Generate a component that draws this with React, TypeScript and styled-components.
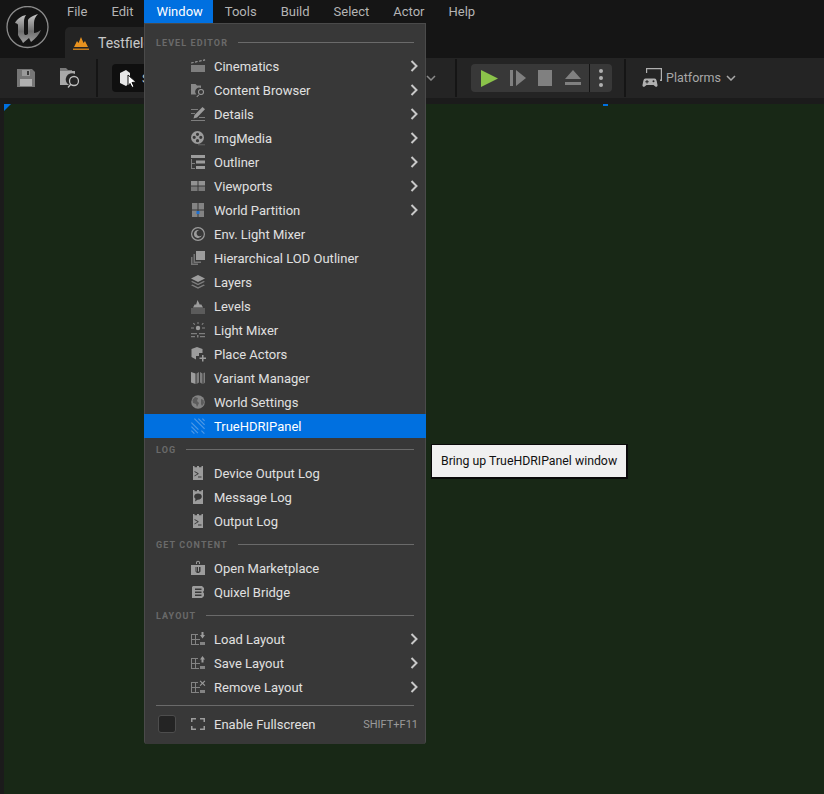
import React from "react";
import styled, { createGlobalStyle } from "styled-components";

const GlobalStyle = createGlobalStyle`
  html, body {
    margin: 0;
    padding: 0;
    background: #151515;
  }
  * {
    box-sizing: border-box;
  }
`;

const Editor = styled.div`
  position: relative;
  width: 824px;
  height: 794px;
  display: flex;
  flex-direction: column;
  overflow: hidden;
  background: #151515;
  font-family: Roboto, "Liberation Sans", sans-serif;
  font-size: 13px;
  color: #c0c0c0;
`;

const TitleBar = styled.header`
  height: 58px;
  display: flex;
  background: #151515;
`;

const LogoSlot = styled.div`
  width: 55px;
  padding: 6px 0 0 6px;
`;

const TitleColumn = styled.div`
  display: flex;
  flex-direction: column;
`;

const MenuBar = styled.nav`
  height: 23px;
  display: flex;
`;

const MenuItem = styled.div<{ $active?: boolean }>`
  display: flex;
  align-items: center;
  padding: 0 12px;
  color: ${(p) => (p.$active ? "#ffffff" : "#b4b4b4")};
  background: ${(p) => (p.$active ? "#0070e0" : "transparent")};
  &:nth-child(2) {
    padding-right: 11px;
  }
  &:nth-child(3) {
    padding-right: 10px;
  }
`;

const TabRow = styled.div`
  margin: 4px 0 0 10px;
  height: 31px;
  width: 200px;
  display: flex;
  align-items: center;
  gap: 9px;
  padding-left: 8px;
  background: #242424;
  border-radius: 5px 0 0 0;
  font-size: 14px;
  color: #c8c8c8;
`;

const Toolbar = styled.div`
  height: 40px;
  display: flex;
  align-items: center;
  background: #242424;
`;

const ToolIcon = styled.div<{ $width: number; $ml: number }>`
  width: ${(p) => p.$width}px;
  margin-left: ${(p) => p.$ml}px;
  height: 22px;
  display: flex;
  align-items: center;
  justify-content: center;
  color: #8a8a8a;
`;

const ToolDivider = styled.div<{ $ml: number }>`
  width: 2px;
  height: 38px;
  margin-left: ${(p) => p.$ml}px;
  background: #151515;
`;

const ModeButton = styled.div`
  margin-left: 14px;
  width: 314px;
  height: 28px;
  display: flex;
  align-items: center;
  gap: 3px;
  padding-left: 7px;
  border-radius: 4px;
  background: #0f0f0f;
  color: #c0c0c0;
  white-space: nowrap;
`;

const PlayGroup = styled.div`
  margin-left: 14px;
  width: 141px;
  height: 28px;
  display: flex;
  align-items: center;
  border-radius: 4px;
  background: #383838;
  color: #808080;
`;

const PlayButton = styled.div<{ $width: number; $pl: number }>`
  width: ${(p) => p.$width}px;
  padding-left: ${(p) => p.$pl}px;
  height: 100%;
  display: flex;
  align-items: center;
`;

const GroupDivider = styled.div`
  width: 1px;
  height: 28px;
  background: #151515;
`;

const DotsButton = styled.div`
  flex: 1;
  display: flex;
  flex-direction: column;
  align-items: center;
  gap: 3px;
`;

const Dot = styled.span`
  width: 4px;
  height: 4px;
  border-radius: 50%;
  background: #b0b0b0;
`;

const PlatformsButton = styled.div`
  margin-left: 16px;
  display: flex;
  align-items: center;
  color: #a8a8a8;
  font-size: 12.5px;
`;

const PlatformsLabel = styled.span`
  margin: -2px 5px 0 3px;
`;

const Chevron = styled.svg`
  display: block;
  fill: none;
  stroke: currentColor;
  stroke-width: 1.5;
`;

const Gutter = styled.div`
  height: 6px;
  background: #1b1b1b;
`;

const ViewportFrame = styled.main`
  flex: 1;
  display: flex;
  background: #1b1b1b;
`;

const Viewport = styled.div`
  position: relative;
  flex: 1;
  margin-left: 4px;
  background: #182816;
`;

const CornerMark = styled.div`
  position: absolute;
  left: 0;
  top: 0;
  width: 0;
  height: 0;
  border-top: 7px solid #0070e0;
  border-right: 7px solid transparent;
`;

const TickMark = styled.div`
  position: absolute;
  left: 599px;
  top: 0;
  width: 5px;
  height: 2px;
  background: #0070e0;
`;

const Menu = styled.div`
  position: absolute;
  left: 144px;
  top: 23px;
  width: 282px;
  height: 721px;
  padding-top: 7px;
  background: #383838;
  border: solid #4a4a4a;
  border-width: 1px 1px 0 1px;
  border-radius: 0 0 3px 3px;
`;

const SectionHeader = styled.div`
  height: 23px;
  display: flex;
  align-items: center;
  gap: 10px;
  padding: 0 11px;
  font-size: 9px;
  font-weight: 700;
  letter-spacing: 1.1px;
  color: #6a6a6a;
`;

const SectionRule = styled.div`
  flex: 1;
  height: 1px;
  background: #6a6a6a;
`;

const Row = styled.div<{ $active?: boolean }>`
  height: 24px;
  display: flex;
  align-items: center;
  margin: 0 -1px;
  padding: 0 8px 0 46px;
  color: #e0e0e0;
  background: ${(p) => (p.$active ? "#0070e0" : "transparent")};
  ${(p) => p.$active && "color: #ffffff;"}
`;

const CheckRow = styled(Row)`
  padding-left: 14px;
`;

const CheckBox = styled.div`
  width: 18px;
  height: 18px;
  margin-right: 14px;
  border: 1px solid #4d4d4d;
  border-radius: 3px;
  background: #242424;
`;

const IconSlot = styled.svg<{ $hdri?: boolean }>`
  width: 16px;
  height: 16px;
  margin-right: 8px;
  flex: none;
  fill: currentColor;
  color: ${(p) => (p.$hdri ? "#4f9ae6" : "#9c9c9c")};
`;

const RowLabel = styled.span`
  flex: 1;
`;

const Shortcut = styled.span`
  font-size: 11px;
  color: #9a9a9a;
`;

const SubArrow = styled(Chevron)`
  color: #c8c8c8;
  stroke-width: 2;
`;

const Separator = styled.div`
  height: 1px;
  margin: 6px 11px;
  background: #6a6a6a;
`;

const Tooltip = styled.div`
  position: absolute;
  left: 431px;
  top: 444px;
  width: 197px;
  height: 35px;
  display: flex;
  align-items: center;
  padding-left: 9px;
  background: #f0f0f0;
  border: 2px solid #0a0a0a;
  border-top-width: 1px;
  border-left-width: 1px;
  font-size: 12.3px;
  color: #111111;
  white-space: nowrap;
`;

const icons: Record<string, React.ReactNode> = {
  cinematics: (
    <>
      <path d="M1 7h14v7H1z" opacity=".7" />
      <path d="M1 4.5 3.5 4l.2 1.100-2.500.5zM5 3.600l2.500-.6.2 1.100-2.500.6zM9 2.700l2.500-.6.2 1.100-2.500.6zM13 1.800l2-.5.2 1.100-2 .5z" />
    </>
  ),
  browser: (
    <>
      <path d="M1 2h4.500L7 3.500h4V6a4 4 0 0 0-4.500 6.500H1z" opacity=".8" />
      <path d="M11 7a3 3 0 1 0 0 6 3 3 0 0 0 0-6zm0 1a2 2 0 1 1 0 4 2 2 0 0 1 0-4z" />
      <path d="m8.600 12.400.7.7-2.200 2.200-.7-.7z" />
    </>
  ),
  details: (
    <>
      <path d="M1 3h7v1H1zM1 7h4v1H1zM1 14h14v1H1zM9 11h6v1H9z" opacity=".7" />
      <path d="M12.500 1 15 3.200 7 11.500l-3.500 1 1-3.400z" />
    </>
  ),
  media: (
    <>
      <path
        fillRule="evenodd"
        d="M7.500 1a6.500 6.500 0 1 0 0 13 6.500 6.500 0 0 0 0-13zm0 1.700a1.600 1.600 0 1 1 0 3.200 1.600 1.600 0 0 1 0-3.200zm-3.300 3a1.600 1.600 0 1 1 0 3.200 1.600 1.600 0 0 1 0-3.200zm6.600 0a1.600 1.600 0 1 1 0 3.200 1.600 1.600 0 0 1 0-3.200zM7.500 9.100a1.600 1.600 0 1 1 0 3.200 1.600 1.600 0 0 1 0-3.200z"
      />
      <path d="M8 14.500h7v.7H8z" opacity=".6" />
    </>
  ),
  outliner: (
    <>
      <path d="M1 1h14v3H1zM6 6.500h9v3H6zM6 12h9v3H6z" />
      <path d="M1 5h1v9h3v1H1zM2 9h3v1H2z" opacity=".7" />
    </>
  ),
  viewports: (
    <>
      <path d="M1 3h6.500v4.500H1zM8.500 3H15v4.500H8.500z" opacity=".9" />
      <path d="M1 8.500h6.500V13H1zM8.500 8.500H15V13H8.500z" opacity=".65" />
    </>
  ),
  partition: (
    <>
      <path d="M2 1h5.500v6.500H2zM8.500 1H14v6.500H8.500zM2 8.500h5.500V15H2zM8.500 8.500H14V15H8.500z" opacity=".75" />
      <path d="M6.500 9h3v3h-3z" fill="#1d6fd0" />
    </>
  ),
  env: (
    <path
      fillRule="evenodd"
      d="M8 1a7 7 0 1 0 0 14A7 7 0 0 0 8 1zm0 1.200a5.800 5.800 0 1 1 0 11.600A5.800 5.800 0 0 1 8 2.200zM8 4a4 4 0 1 0 3.800 5.200 3 3 0 1 1-2.300-5z"
    />
  ),
  hlod: (
    <>
      <path d="M6 1h9v9H6z" />
      <path d="M3.500 4H5v7.500h6V13H3.500zM1 7h1.500v6.500H8V15H1z" opacity=".6" />
    </>
  ),
  layers: (
    <>
      <path d="M8 1l7 3.500L8 8 1 4.500z" />
      <path d="M2.500 7 8 9.800 13.500 7 15 7.800 8 11.300 1 7.800zM2.500 10.500 8 13.300l5.500-2.800 1.500.8-7 3.500-7-3.500z" opacity=".7" />
    </>
  ),
  levels: (
    <>
      <path d="M3 9.500 5 6l1 1 1.500-5L10 7l1-1 2 3.500z" />
      <path d="M1 10.500h14v1H1zM1 12.500h14v1H1zM1 14.500h14v1H1z" opacity=".7" />
    </>
  ),
  lightmix: (
    <>
      <circle cx="8" cy="6" r="2.200" />
      <path d="M7.500 0h1v2h-1zM1 5.500h3v1H1zM12 5.500h3v1h-3zM3 1.500l.7-.7 1.500 1.500-.7.7zM11.500 2.300l1.500-1.500.7.7-1.500 1.500z" opacity=".8" />
      <path d="M1 11h6v1.200H1zM9 11h6v1.200H9zM1 14h4v1.200H1zM7 13h1.500v2.500H7zM10 14h5v1.200h-5z" opacity=".7" />
    </>
  ),
  place: (
    <>
      <path d="M7 1l5.500 2v4H9v3H6v3.500L1.500 11V3z" />
      <path d="M12 9h1.500v2.500H16V13h-2.500v2.500H12V13H9.500v-1.500H12z" />
    </>
  ),
  variant: (
    <>
      <path d="M1 2l4.500 1.500V14L1 12.500z" />
      <path d="M6.500 3.500 9 2v10.500L6.500 14zM10 2l2.500 1.500V14L10 12.500zM13.500 3 15 2.500v10L13.500 14z" opacity=".7" />
    </>
  ),
  world: (
    <>
      <circle cx="8" cy="8" r="6.800" opacity=".75" />
      <path d="M5 3l3 1-1 3 2 2-2 4-1-3-3-1-.5-3zM11 5l2.500 1 .5 3-2 3-1-2z" fill="#5c5c5c" />
    </>
  ),
  hdri: (
    <path d="M1 5l.8-.8 7 7-.8.8zM1 9l.8-.8 6.500 6.500-.8.8zM4 1l.8-.8L15 10.400l-.8.8zM8 1l.8-.8 6.200 6.200-.8.8zM12 1l.8-.8 2.200 2.200-.8.8zM1 13l.8-.8 3 3-.8.8zM11 13l.8-.8 3 3-.8.8z" />
  ),
  log: (
    <path
      fillRule="evenodd"
      d="M3 1h1.500v1.200H7V1h2v1.200h2.500V1H13v14H3zm1.500 5v1l3 1.700-3 1.700v1l4-2.300v-.8zM8 11.500v1h3.500v-1z"
    />
  ),
  message: (
    <path
      fillRule="evenodd"
      d="M3 1h1.500v1.200H7V1h2v1.200h2.500V1H13v14H3zm5 3.500c-2.200 0-3.800 1.200-3.800 3 0 1 .5 1.800 1.300 2.300L5 12.500l2.500-1.800H8c2.200 0 3.800-1.200 3.800-3.100 0-1.900-1.600-3.100-3.800-3.100z"
    />
  ),
  market: (
    <path
      fillRule="evenodd"
      d="M6 4V2.800a2 2 0 0 1 4 0V4H9V2.800a1 1 0 0 0-2 0V4zM1 5h14v10H1zm4.500 2v4.500L7 13h2l1.500-1.500V7H9v4.500H8V7H7v4.500h-.5V7z"
    />
  ),
  quixel: (
    <path
      fillRule="evenodd"
      d="M3 2h9l2 2v2.500L13 8l1 1.500V12l-2 2H2V3zm2 2.500V6h6.500V4.500zm0 3V9h6.500V7.500zm0 3V12h6.500v-1.500z"
    />
  ),
  fullscreen: <path d="M1 2h5v1.500H2.500V6H1zM10 2h5v4h-1.500V3.500H10zM1 10h1.500v2.500H6V14H1zM13.500 10H15v4h-5v-1.500h3.500z" />,
};

const layoutGrid = (
  <path
    fillRule="evenodd"
    opacity=".75"
    d="M1 3h7v1H6v4h4v1H6v4h3v1H1zm1 1v4h3V4zm0 5v4h3V9zM10 11h5v3h-5z"
  />
);

const layoutIcons: Record<string, React.ReactNode> = {
  load: <path d="M11.500 1h2v3H15l-2.500 3.500L10 4h1.500z" />,
  save: <path d="M12.500 1 15 4.500h-1.500v3h-2v-3H10z" />,
  remove: <path d="m10.500 1.500 2 2 2-2 .8.8-2 2 2 2-.8.8-2-2-2 2-.8-.8 2-2-2-2z" />,
};

function MenuIcon({ name }: { name: string }) {
  return (
    <IconSlot viewBox="0 0 16 16" $hdri={name === "hdri"}>
      {layoutIcons[name] ? (
        <>
          {layoutGrid}
          {layoutIcons[name]}
        </>
      ) : (
        icons[name]
      )}
    </IconSlot>
  );
}

function Arrow() {
  return (
    <SubArrow width="8" height="12" viewBox="0 0 8 12">
      <path d="M1.500 1 6.500 6 1.500 11" />
    </SubArrow>
  );
}

interface IEntry {
  label: string;
  icon: string;
  sub?: boolean;
  active?: boolean;
}

interface ISection {
  title: string;
  entries: IEntry[];
}

const sections: ISection[] = [
  {
    title: "LEVEL EDITOR",
    entries: [
      { label: "Cinematics", icon: "cinematics", sub: true },
      { label: "Content Browser", icon: "browser", sub: true },
      { label: "Details", icon: "details", sub: true },
      { label: "ImgMedia", icon: "media", sub: true },
      { label: "Outliner", icon: "outliner", sub: true },
      { label: "Viewports", icon: "viewports", sub: true },
      { label: "World Partition", icon: "partition", sub: true },
      { label: "Env. Light Mixer", icon: "env" },
      { label: "Hierarchical LOD Outliner", icon: "hlod" },
      { label: "Layers", icon: "layers" },
      { label: "Levels", icon: "levels" },
      { label: "Light Mixer", icon: "lightmix" },
      { label: "Place Actors", icon: "place" },
      { label: "Variant Manager", icon: "variant" },
      { label: "World Settings", icon: "world" },
      { label: "TrueHDRIPanel", icon: "hdri", active: true },
    ],
  },
  {
    title: "LOG",
    entries: [
      { label: "Device Output Log", icon: "log" },
      { label: "Message Log", icon: "message" },
      { label: "Output Log", icon: "log" },
    ],
  },
  {
    title: "GET CONTENT",
    entries: [
      { label: "Open Marketplace", icon: "market" },
      { label: "Quixel Bridge", icon: "quixel" },
    ],
  },
  {
    title: "LAYOUT",
    entries: [
      { label: "Load Layout", icon: "load", sub: true },
      { label: "Save Layout", icon: "save", sub: true },
      { label: "Remove Layout", icon: "remove", sub: true },
    ],
  },
];

const topMenus = ["File", "Edit", "Window", "Tools", "Build", "Select", "Actor", "Help"];

function Logo() {
  return (
    <svg width="44" height="44" viewBox="0 0 44 44">
      <defs>
        <linearGradient id="ue" x1="0" y1="0" x2="0" y2="1">
          <stop offset="0" stopColor="#c8c8c8" />
          <stop offset="0.6" stopColor="#6e6e6e" />
          <stop offset="1" stopColor="#a0a0a0" />
        </linearGradient>
      </defs>
      <circle cx="21.500" cy="21" r="20.500" fill="#141414" stroke="#8c8c8c" strokeWidth="1.300" />
      <path
        fill="url(#ue)"
        d="M9 17C11 13 15 10 20 9 18 12 18 14 18 16V27C18 29 20 30 22 28V14C23 12 26 10 32 8 29 11 28 14 28 17V27C30 27 32 26 35 24 33 29 29 33 25 36L23 32 17 37C16 34 13 32 12 29V19C12 18 10.500 17 9 17Z"
      />
    </svg>
  );
}

function App() {
  return (
    <Editor>
      <GlobalStyle />
      <TitleBar>
        <LogoSlot>
          <Logo />
        </LogoSlot>
        <TitleColumn>
          <MenuBar>
            {topMenus.map((m) => (
              <MenuItem key={m} $active={m === "Window"}>
                {m}
              </MenuItem>
            ))}
          </MenuBar>
          <TabRow>
            <svg width="16" height="16" viewBox="0 0 16 16">
              <path fill="#e8921f" d="M1 12 4 6l1.500 2L8 2l2.500 6L12 6l3 6z" />
              <path fill="#c47a1a" d="M0 13.500h16V15H0z" />
            </svg>
            Testfield
          </TabRow>
        </TitleColumn>
      </TitleBar>
      <Toolbar>
        <ToolIcon $width={18} $ml={17}>
          <svg width="18" height="18" viewBox="0 0 18 18">
            <path fill="#767676" d="M0 0h15l3 3v15H0z" />
            <path fill="#9a9a9a" d="M5 1h8v6H5z" />
            <path fill="#3a3a3a" d="M10 2h2v4h-2z" />
            <path fill="#b0b0b0" d="M3 10h12v7H3z" />
          </svg>
        </ToolIcon>
        <ToolIcon $width={20} $ml={25}>
          <svg width="20" height="20" viewBox="0 0 20 20">
            <path fill="#7a7a7a" d="M0 0h6l2 2h4v2H0z" />
            <path fill="#a8a8a8" d="M0 3h15v3a6 6 0 0 0-6 11H0z" />
            <circle cx="14" cy="13" r="4.500" fill="none" stroke="#c0c0c0" strokeWidth="1.300" />
            <path fill="#c0c0c0" d="m10.500 15.500 1 1L8.500 20l-1-1z" />
          </svg>
        </ToolIcon>
        <ToolDivider $ml={16} />
        <ModeButton>
          <svg width="20" height="20" viewBox="0 0 20 20">
            <path fill="#e8e8e8" d="M1 5l6-3 4 3v10l-4 3-6-3z" />
            <path fill="#ffffff" stroke="#0f0f0f" d="M9 7l8 7-4 .5 2 4-2 1-2-4-2 2.500z" />
          </svg>
          Selection Mode
        </ModeButton>
        <ToolIcon $width={10} $ml={0}>
          <Chevron width="10" height="6" viewBox="0 0 10 6">
            <path d="M1 1l4 4 4-4" />
          </Chevron>
        </ToolIcon>
        <ToolDivider $ml={19} />
        <PlayGroup>
          <PlayButton $width={32} $pl={10}>
            <svg width="17" height="17" viewBox="0 0 17 17">
              <path fill="#8bc34a" d="M0 0l17 8.500L0 17z" />
            </svg>
          </PlayButton>
          <PlayButton $width={28} $pl={7}>
            <svg width="16" height="16" viewBox="0 0 16 16" fill="currentColor">
              <path d="M0 0h3v16H0zM6 0l10 8-10 8z" />
            </svg>
          </PlayButton>
          <PlayButton $width={27} $pl={7}>
            <svg width="14" height="16" viewBox="0 0 14 16" fill="currentColor">
              <path d="M0 0h14v16H0z" />
            </svg>
          </PlayButton>
          <PlayButton $width={31} $pl={7}>
            <svg width="16" height="16" viewBox="0 0 16 16" fill="currentColor">
              <path d="M8 0l8 9H0zM0 12h16v3H0z" />
            </svg>
          </PlayButton>
          <GroupDivider />
          <DotsButton>
            <Dot />
            <Dot />
            <Dot />
          </DotsButton>
        </PlayGroup>
        <ToolDivider $ml={12} />
        <PlatformsButton>
          <svg width="21" height="20" viewBox="0 0 21 20" fill="#b0b0b0">
            <path fillRule="evenodd" d="M4 0h16v13h-2v-1.500h.8V1.200H5.200V5H4z" />
            <path
              fillRule="evenodd"
              d="M3.500 10.500h9c1.200 0 1.800.8 2.200 2.500l.8 4c.3 1.700-1.300 2.500-2.500 1.300L11.500 17h-7L3 18.300C1.800 19.500.2 18.700.5 17l.8-4c.4-1.700 1-2.500 2.200-2.500zm1 1.500v1.200H3.300v1h1.200v1.200h1v-1.200h1.200v-1H5.500V12zm7 .300a1 1 0 1 0 0 2 1 1 0 0 0 0-2z"
            />
          </svg>
          <PlatformsLabel>Platforms</PlatformsLabel>
          <Chevron width="10" height="6" viewBox="0 0 10 6">
            <path d="M1 1l4 4 4-4" />
          </Chevron>
        </PlatformsButton>
      </Toolbar>
      <Gutter />
      <ViewportFrame>
        <Viewport>
          <CornerMark />
          <TickMark />
        </Viewport>
      </ViewportFrame>
      <Menu>
        {sections.map((s) => (
          <section key={s.title}>
            <SectionHeader>
              {s.title}
              <SectionRule />
            </SectionHeader>
            {s.entries.map((e) => (
              <Row key={e.label} $active={e.active}>
                <MenuIcon name={e.icon} />
                <RowLabel>{e.label}</RowLabel>
                {e.sub && <Arrow />}
              </Row>
            ))}
          </section>
        ))}
        <Separator />
        <CheckRow>
          <CheckBox />
          <MenuIcon name="fullscreen" />
          <RowLabel>Enable Fullscreen</RowLabel>
          <Shortcut>SHIFT+F11</Shortcut>
        </CheckRow>
      </Menu>
      <Tooltip>Bring up TrueHDRIPanel window</Tooltip>
    </Editor>
  );
}

export default App;
